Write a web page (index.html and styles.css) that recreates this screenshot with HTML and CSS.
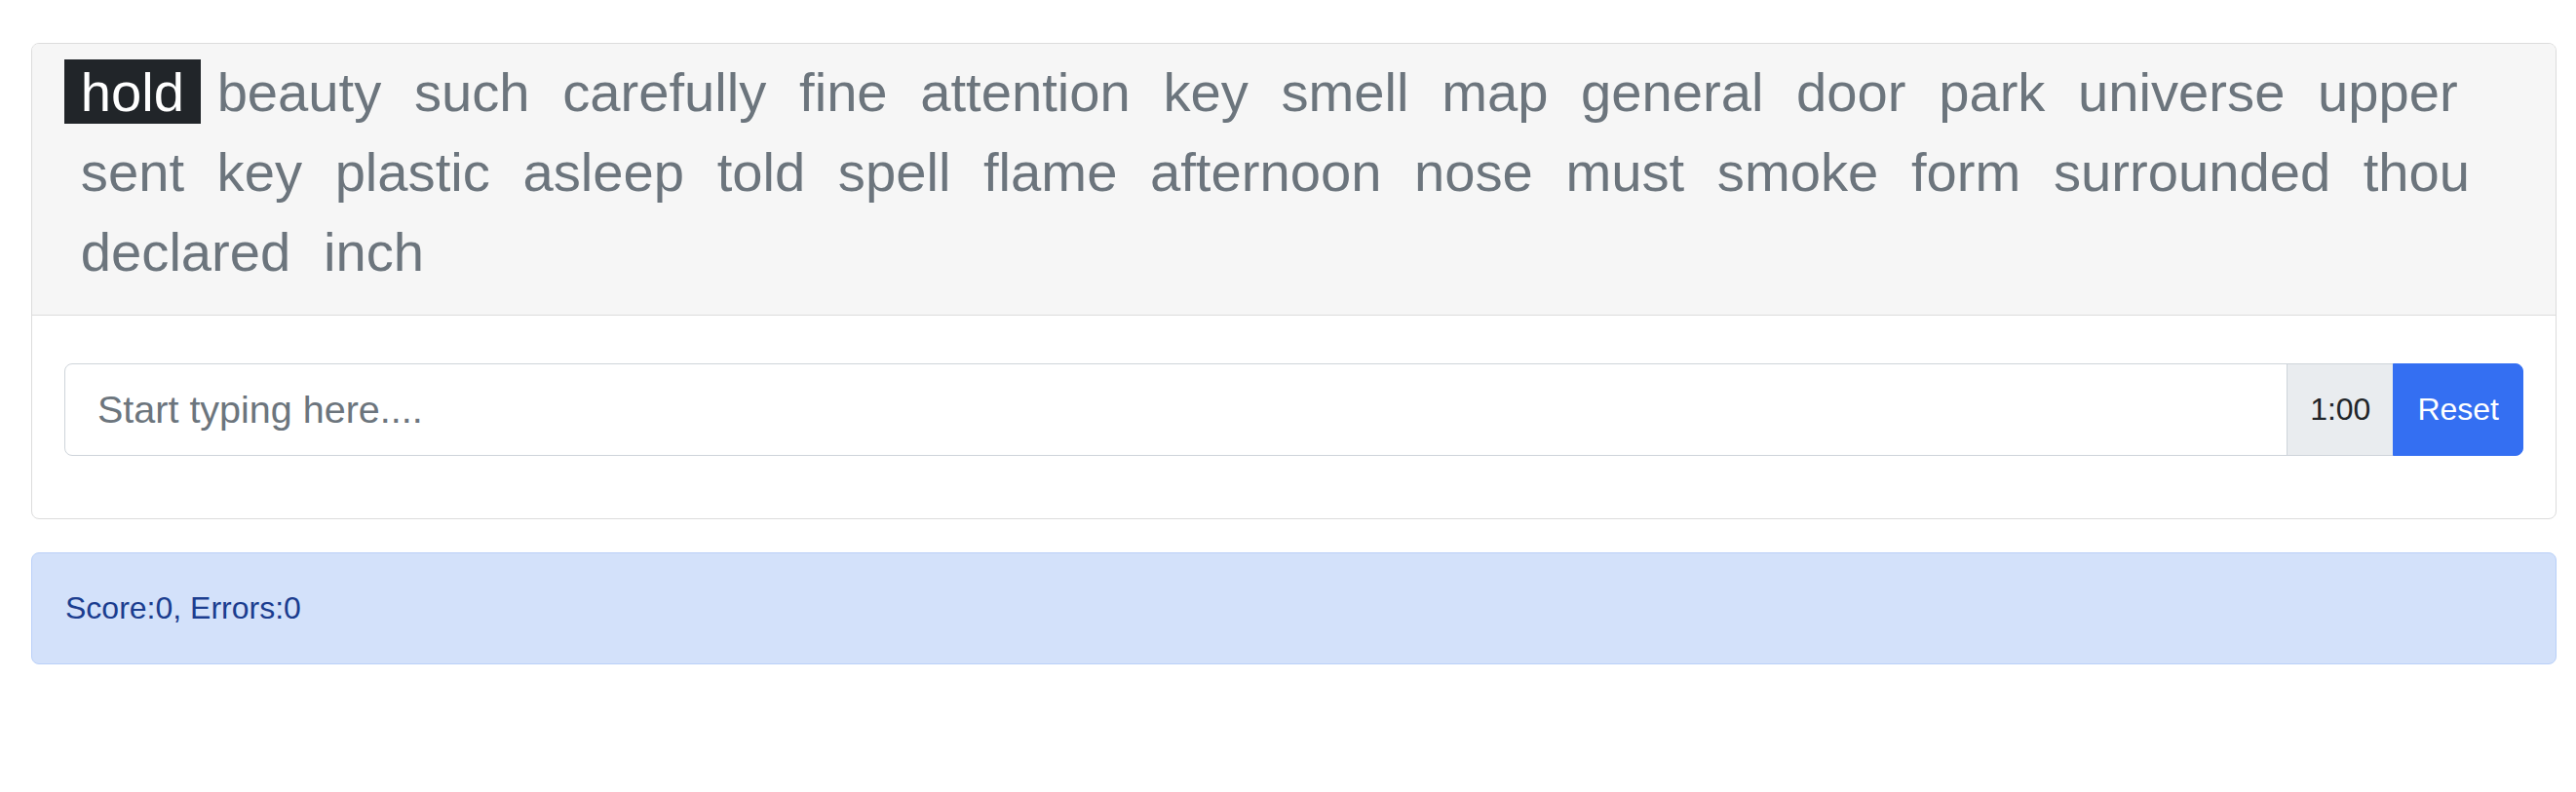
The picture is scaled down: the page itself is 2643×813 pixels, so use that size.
FILE: index.html
```html
<!DOCTYPE html>
<html lang="en">
<head>
<meta charset="utf-8">
<title>Typing test</title>
<link rel="stylesheet" href="styles.css">
</head>
<body>
<div class="page">
  <div class="card">
    <div class="card-header">
      <div class="words">
        <span class="word current">hold</span><span class="word">beauty</span><span class="word">such</span><span class="word">carefully</span><span class="word">fine</span><span class="word">attention</span><span class="word">key</span><span class="word">smell</span><span class="word">map</span><span class="word">general</span><span class="word">door</span><span class="word">park</span><span class="word">universe</span><span class="word">upper</span><span class="word">sent</span><span class="word">key</span><span class="word">plastic</span><span class="word">asleep</span><span class="word">told</span><span class="word">spell</span><span class="word">flame</span><span class="word">afternoon</span><span class="word">nose</span><span class="word">must</span><span class="word">smoke</span><span class="word">form</span><span class="word">surrounded</span><span class="word">thou</span><span class="word">declared</span><span class="word">inch</span>
      </div>
    </div>
    <div class="card-body">
      <div class="input-group">
        <input class="type-input" type="text" placeholder="Start typing here....">
        <span class="timer">1:00</span>
        <button class="reset" type="button">Reset</button>
      </div>
    </div>
  </div>
  <div class="alert">Score:0, Errors:0</div>
</div>
</body>
</html>
```

FILE: styles.css
```css
html, body {
  margin: 0;
  padding: 0;
  background: #ffffff;
}

body {
  font-family: "Liberation Sans", Arial, Helvetica, sans-serif;
  color: #212529;
}

.page {
  padding: 44px 20px 0 32px;
}

.card {
  border: 1px solid #dcdcdc;
  border-radius: 8px;
  background: #ffffff;
  overflow: hidden;
}

.card-header {
  background: #f6f6f6;
  border-bottom: 1px solid #dcdcdc;
  padding: 16px 33px 32px 33px;
}

.words {
  display: flex;
  flex-wrap: wrap;
  row-gap: 16px;
}

.word {
  font-size: 56.2px;
  line-height: 62px;
  padding: 3px 16.8px 1px 16.8px;
  color: #6c757d;
  white-space: nowrap;
}

.word.current {
  background: #212529;
  color: #ffffff;
}

.card-body {
  padding: 49px 33px 64px 33px;
}

.input-group {
  display: flex;
  height: 95px;
}

.type-input {
  flex: 1 1 auto;
  min-width: 0;
  box-sizing: border-box;
  height: 95px;
  margin: 0;
  padding: 0 33px;
  border: 1px solid #ced4da;
  border-radius: 8px 0 0 8px;
  font-family: "Liberation Sans", Arial, Helvetica, sans-serif;
  font-size: 39.5px;
  color: #212529;
  background: #ffffff;
  outline: none;
}

.type-input::placeholder {
  color: #6c757d;
  opacity: 1;
}

.timer {
  display: flex;
  align-items: center;
  box-sizing: border-box;
  padding: 0 23px;
  margin-left: -1px;
  border: 1px solid #ced4da;
  background: #e9ecef;
  font-size: 32px;
  color: #212529;
}

.reset {
  display: flex;
  align-items: center;
  box-sizing: border-box;
  margin: 0 0 0 -1px;
  padding: 0 24px;
  border: 1px solid #346ff2;
  border-radius: 0 8px 8px 0;
  background: #346ff2;
  color: #ffffff;
  font-family: "Liberation Sans", Arial, Helvetica, sans-serif;
  font-size: 32px;
}

.alert {
  margin-top: 34px;
  padding: 33px 34px;
  border: 1px solid #b9d0f8;
  border-radius: 8px;
  background: #d3e1fa;
  color: #1b3d8f;
  font-size: 32px;
  line-height: 47px;
}
```
